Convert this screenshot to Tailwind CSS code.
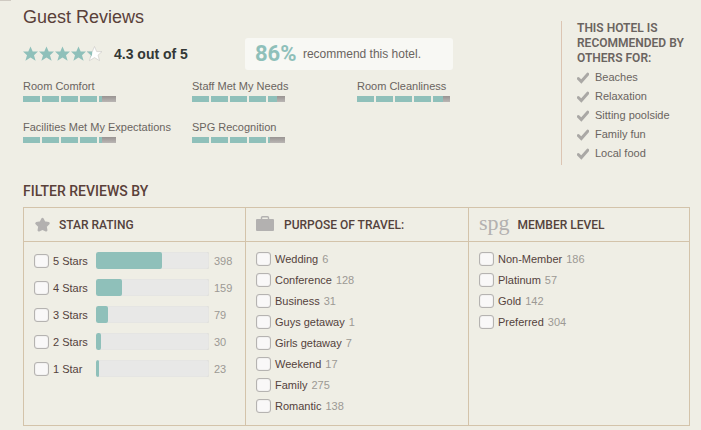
<!DOCTYPE html>
<html lang="en">
<head>
    <meta charset="UTF-8">
    <meta name="viewport" content="width=device-width, initial-scale=1.0">
    <title>Guest Reviews</title>
    <script src="https://cdn.jsdelivr.net/npm/@tailwindcss/browser@4"></script>
</head>
<body class="bg-[#efeee5] font-['Liberation_Sans',Arial,sans-serif] text-[11px] leading-4 text-[#6a6460]">
    <div class="h-px w-[11px] bg-[#cfcac2]"></div>
    <main class="pt-1.5 pr-[11px] pb-1 pl-[23px]">
        <!-- Summary -->
        <div class="flex items-start">
            <section class="flex-1">
                <h1 class="text-lg leading-5 text-[#5a4039]">Guest Reviews</h1>
                <div class="mt-[11px] flex items-center">
                    <svg id="rating" class="h-4 w-20 shrink-0" viewBox="0 1 80 16" role="img" aria-label="4.3 stars"></svg>
                    <p class="ml-[11px] text-sm font-bold text-[#333836]">4.3 out of 5</p>
                    <p class="ml-[57px] flex h-8 w-[208px] items-center rounded-[3px] bg-[#f8f8f4] pl-2.5 text-xs">
                        <strong class="mr-1.5 w-[42px] font-['Roboto',sans-serif] text-[22px] font-bold text-[#8fc0ba]">86%</strong>
                        recommend this hotel.
                    </p>
                </div>
                <ul id="scores" class="mt-2 grid grid-cols-[169px_165px_1fr] gap-y-[17px]"></ul>
            </section>
            <aside class="mt-3.5 w-[129px] border-l border-[#dcc5b3] pl-[15px]">
                <h2 class="font-['Roboto',sans-serif] text-xs leading-[15px] font-semibold whitespace-nowrap">THIS HOTEL IS<br>RECOMMENDED BY<br>OTHERS FOR:</h2>
                <ul id="reasons" class="mt-0.5 pb-0.5 leading-[19px]"></ul>
            </aside>
        </div>

        <!-- Filters -->
        <h2 class="mt-4 font-['Roboto',sans-serif] text-sm leading-5 font-medium text-[#5a4039]">FILTER REVIEWS BY</h2>
        <form class="mt-1.5 grid grid-cols-[222fr_223fr_220fr] divide-x divide-[#d3c3aa] border border-[#d3c3aa] text-[#54423c]">
            <section class="min-h-[217px]">
                <h3 class="flex h-[34px] items-center border-b border-[#d3c3aa] pl-2.5 font-['Roboto',sans-serif] text-xs font-medium">
                    <svg class="mr-2 h-[17px] w-[17px]" viewBox="0 0 17 17" fill="#b3b1b0" stroke="#b3b1b0" stroke-width="2.500" stroke-linejoin="round"><path d="M8.500 3l1.800 3.600 4.200.700-3 3 .700 4-3.700-1.700-3.700 1.700.700-4-3-3 4.200-.700z"/></svg>
                    STAR RATING
                </h3>
                <div id="stars" class="flex flex-col gap-2.5 pt-2.5 pl-2.5"></div>
            </section>
            <section>
                <h3 class="flex h-[34px] items-center border-b border-[#d3c3aa] pl-2.5 font-['Roboto',sans-serif] text-xs font-medium">
                    <svg class="mr-2.5 h-[17px] w-[18px]" viewBox="0 0 18 17" fill="#b3b1b0"><path d="M1 3h16q1 0 1 1v10q0 1-1 1H1q-1 0-1-1V4q0-1 1-1z"/><path d="M5.500 3V1.700q0-1 1-1h5q1 0 1 1V3" fill="none" stroke="#b3b1b0" stroke-width="1.400"/></svg>
                    PURPOSE OF TRAVEL:
                </h3>
                <div id="purpose" class="flex flex-col gap-[5px] py-[9px] pl-2.5"></div>
            </section>
            <section>
                <h3 class="flex h-[34px] items-center border-b border-[#d3c3aa] pl-2.5 font-['Roboto',sans-serif] text-xs font-medium">
                    <span class="mr-2 pb-1 font-['Liberation_Serif',serif] text-[22px] font-normal text-[#b3b1b0]">spg</span>
                    MEMBER LEVEL
                </h3>
                <div id="level" class="flex flex-col gap-[5px] py-[9px] pl-2.5"></div>
            </section>
        </form>
    </main>

    <script>
        const scores = [
            ['Room Comfort', 20],
            ['Staff Met My Needs', 50],
            ['Room Cleanliness', 60],
            ['Facilities Met My Expectations', 20],
            ['SPG Recognition', 10],
        ];
        const reasons = ['Beaches', 'Relaxation', 'Sitting poolside', 'Family fun', 'Local food'];
        const stars = [['5 Stars', 398, 58], ['4 Stars', 159, 23], ['3 Stars', 79, 11], ['2 Stars', 30, 4], ['1 Star', 23, 3]];
        const purpose = [['Wedding', 6], ['Conference', 128], ['Business', 31], ['Guys getaway', 1], ['Girls getaway', 7], ['Weekend', 17], ['Family', 275], ['Romantic', 138]];
        const level = [['Non-Member', 186], ['Platinum', 57], ['Gold', 142], ['Preferred', 304]];

        const fill = (id, items, render) => {
            document.getElementById(id).innerHTML = items.map(render).join('');
        };
        const checkbox = '<input type="checkbox" class="h-3.5 w-[15px] shrink-0 appearance-none rounded-[3px] border border-[#b5b3b1] bg-[#f9f8f8] shadow-[inset_0_0_1px_#b5b3b1] checked:bg-[#8fc0ba]">';

        // Five stars, the last one partly filled
        const starPath = 'M7.500 .5l2.200 5.100h5.300l-4 3.600 1.600 5.500-5.100-3.100-5.100 3.100 1.600-5.500L0 5.600h5.300z';
        fill('rating', [0, 1, 2, 3, 4], i => `
            <g transform="translate(${i * 16} 1)">
                ${i < 4
                    ? `<path d="${starPath}" fill="#8fc0ba"/>`
                    : `<path d="${starPath}" fill="#fff" stroke="#cfcdca" stroke-width=".7"/><path d="M5.300 5.600H0l4 3.600-.8 2.700 1.800-3z" fill="#8fc0ba"/>`}
            </g>`);

        fill('scores', scores, ([name, last]) => `
            <li>
                <p class="leading-4 pb-0.5">${name}</p>
                <div class="flex gap-0.5">
                    ${'<span class="h-1.5 w-[17px] bg-[#8fc0ba]"></span>'.repeat(4)}
                    <span class="h-1.5 w-[17px] bg-linear-to-b from-[#999492] to-[#bab6b4]"><span class="block h-full bg-[#8fc0ba]" style="width:${last}%"></span></span>
                </div>
            </li>`);

        fill('reasons', reasons, name => `
            <li class="flex items-center gap-1.5">
                <svg class="h-3 w-3" viewBox="0 0 12 12" fill="none" stroke="#aaa8a5" stroke-width="3"><path d="M1.300 6.500l3 3L10.700 2.200" stroke-linecap="round"/></svg>${name}
            </li>`);

        fill('stars', stars, ([name, count, width]) => `
            <label class="flex h-[17px] items-center">
                ${checkbox}
                <span class="ml-1 w-[43px]">${name}</span>
                <span class="h-[17px] w-[113px] overflow-hidden rounded-xs bg-[#e8e8e7] shadow-[inset_0_0_1px_#c8c8c4]"><span class="block h-full rounded-xs bg-[#8fc0ba]" style="width:${width}%"></span></span>
                <span class="ml-[5px] text-[#9c9994]">${count}</span>
            </label>`);

        const option = ([name, count]) => `
            <label class="flex h-4 items-center">
                ${checkbox}
                <span class="ml-1">${name}</span>
                <span class="ml-1 text-[#9c9994]">${count}</span>
            </label>`;
        fill('purpose', purpose, option);
        fill('level', level, option);
    </script>
</body>
</html>
